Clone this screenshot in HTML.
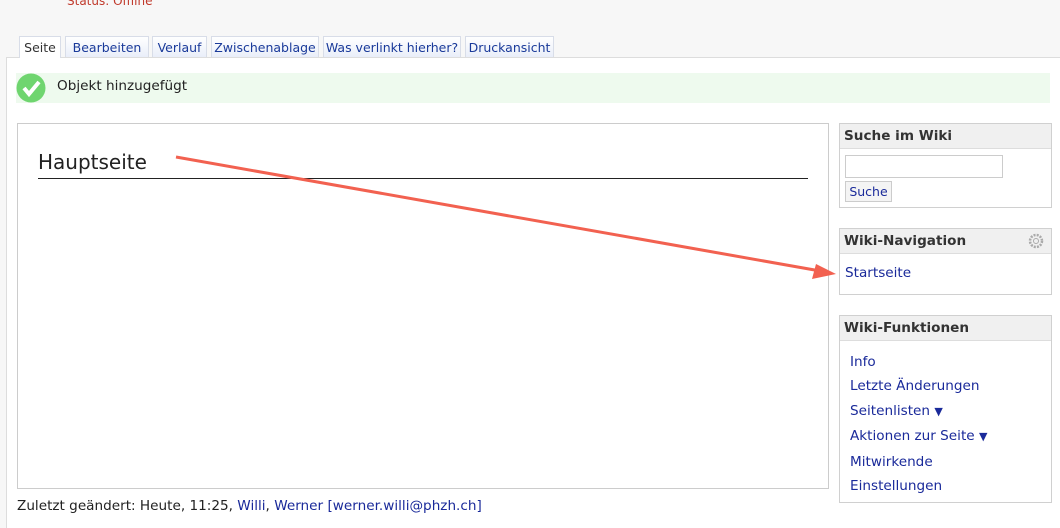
<!DOCTYPE html><html><head><style>
body{margin:0;width:1060px;height:524px;background:#f7f7f7;font-family:"DejaVu Sans","Liberation Sans",sans-serif;font-size:13.6px;position:relative;overflow:hidden;color:#222}
.a{position:absolute}
.tab{position:absolute;top:36px;height:21px;border:1px solid #d8dde8;border-bottom:none;background:linear-gradient(#fff,#e9eef9);color:#1a3a9a;font-size:12.5px;line-height:21px;text-align:center;box-sizing:border-box;white-space:nowrap;overflow:hidden}
.box{position:absolute;left:839px;width:213px;border:1px solid #d0d0d0;background:#fff;box-sizing:border-box}
.box h3{margin:0;height:24px;line-height:24px;background:#f0f0f0;border-bottom:1px solid #ddd;font-size:13.6px;padding-left:4px;color:#333}
.l{color:#1a2a9a}
</style></head><body>
<div class="a" style="left:67px;top:-6px;color:#c0392b;font-size:12px">Status: Offline</div>
<div class="a" style="left:6px;top:57px;width:1060px;height:470px;background:#fff;border-left:1px solid #ddd;border-top:1px solid #ddd"></div>
<div class="tab" style="left:19px;width:42px;background:#fff;color:#333;height:22px">Seite</div>
<div class="tab" style="left:65px;width:84px">Bearbeiten</div>
<div class="tab" style="left:152px;width:55px">Verlauf</div>
<div class="tab" style="left:211px;width:108px">Zwischenablage</div>
<div class="tab" style="left:323px;width:138px">Was verlinkt hierher?</div>
<div class="tab" style="left:465px;width:89px">Druckansicht</div>
<div class="a" style="left:16px;top:73px;width:1034px;height:30px;background:#eefaee"></div>
<svg class="a" style="left:16px;top:73px" width="30" height="30"><circle cx="15" cy="15" r="14.5" fill="#6fd56f"/><path d="M8 15l5 6 10-12" stroke="#fff" stroke-width="4" fill="none"/></svg>
<div class="a" style="left:57px;top:78px">Objekt hinzugefügt</div>
<div class="a" style="left:17px;top:123px;width:812px;height:366px;border:1px solid #ccc;box-sizing:border-box"></div>
<div class="a" style="left:38px;top:150px;font-size:20px">Hauptseite</div>
<div class="a" style="left:38px;top:178px;width:770px;height:1px;background:#222"></div>
<div class="box" style="top:123px;height:85px"><h3>Suche im Wiki</h3>
<div class="a" style="left:5px;top:31px;width:158px;height:23px;border:1px solid #ccc;box-sizing:border-box"></div>
<div class="a" style="left:5px;top:57px;width:47px;height:21px;border:1px solid #ccc;background:#f4f4f4;font-size:12.5px;line-height:20px;text-align:center;color:#1a2a9a;box-sizing:border-box">Suche</div></div>
<div class="box" style="top:228px;height:67px"><h3>Wiki-Navigation</h3>
<svg class="a" style="left:188px;top:4px" width="16" height="16"><circle cx="8" cy="8" r="6" fill="none" stroke="#aaa" stroke-width="2.5" stroke-dasharray="2 1.2"/><circle cx="8" cy="8" r="2.5" fill="none" stroke="#aaa"/></svg>
<div class="a l" style="left:5px;top:36px">Startseite</div></div>
<div class="box" style="top:315px;height:188px"><h3>Wiki-Funktionen</h3>
<div class="a l" style="left:10px;top:34px;line-height:24.4px">Info<br>Letzte Änderungen<br>Seitenlisten <span style="font-size:11px">▼</span><br>Aktionen zur Seite <span style="font-size:11px">▼</span><br>Mitwirkende<br>Einstellungen</div></div>
<div class="a" style="left:17px;top:498px">Zuletzt geändert: Heute, 11:25, <span class="l">Willi</span>, <span class="l">Werner</span> <span class="l">[werner.willi@phzh.ch]</span></div>
<svg class="a" style="left:0;top:0" width="1060" height="524"><line x1="176" y1="157" x2="826" y2="272" stroke="#f26150" stroke-width="3"/><path d="M836 274l-20-10 -4 15z" fill="#f26150"/></svg>
</body></html>
